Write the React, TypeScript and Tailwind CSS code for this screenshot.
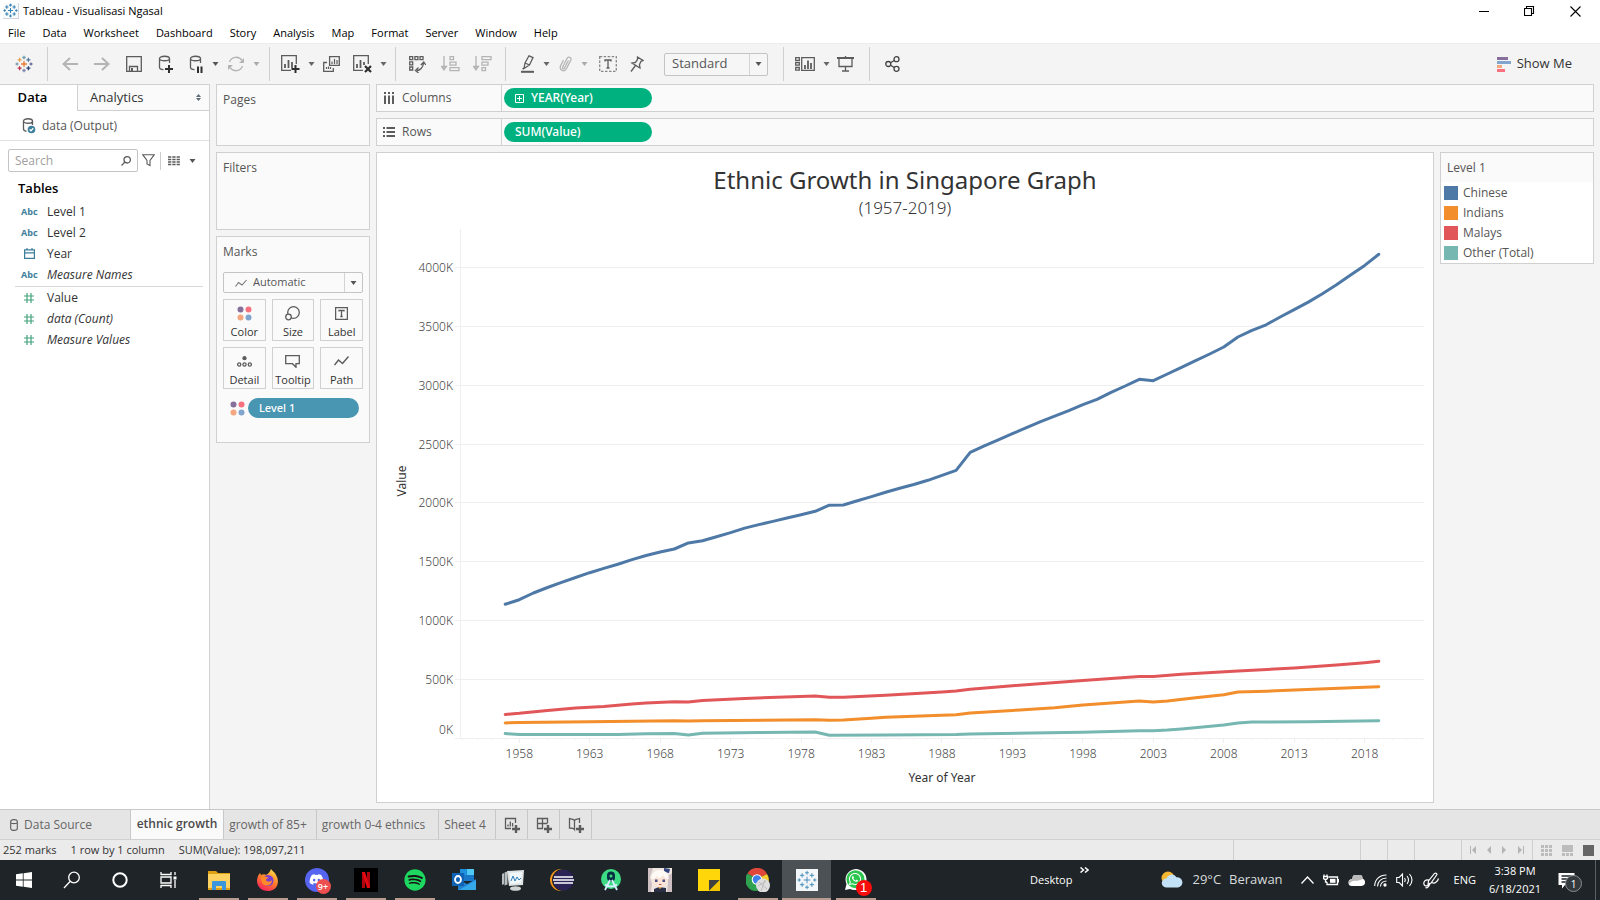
import type { ReactNode } from 'react';
import { FaDiscord, FaSpotify, FaWhatsapp } from 'react-icons/fa';

const UI = "font-['Open_Sans','Noto_Sans',sans-serif]";

/* ---------- small icons ---------- */

function Icon({ w = 18, h = 18, color = '#5c5c5c', children }: { w?: number; h?: number; color?: string; children: ReactNode }) {
  return (
    <svg width={w} height={h} viewBox={`0 0 ${w} ${h}`} fill="none" stroke={color} strokeWidth="1.3" aria-hidden="true" className="shrink-0">
      {children}
    </svg>
  );
}

function Caret({ color = '#555' }: { color?: string }) {
  return (
    <svg width="7" height="4" viewBox="0 0 7 4" aria-hidden="true" className="shrink-0">
      <path d="M.5 0h6L3.5 4z" fill={color} />
    </svg>
  );
}

const CLUSTER: [number, number, number][] = [
  [9, 9, 3],
  [9, 2.5, 1.7],
  [9, 15.5, 1.7],
  [2, 9, 1.5],
  [16, 9, 1.5],
  [4.6, 4.8, 2],
  [13.4, 4.8, 2],
  [4.6, 13.2, 2],
  [13.4, 13.2, 2],
];
const BRAND = ['#eb7b34', '#6fa0ab', '#7e86ad', '#7e9fae', '#6b6f9b', '#e8a04a', '#54789c', '#c0344a', '#283f70'];

function TableauMark({ size, colors, stroke = 1.3 }: { size: number; colors?: string[]; stroke?: number }) {
  return (
    <svg width={size} height={size} viewBox="0 0 18 18" fill="none" aria-hidden="true" className="shrink-0">
      {CLUSTER.map(([x, y, r], i) => (
        <path key={i} d={`M${x - r} ${y}h${2 * r}M${x} ${y - r}v${2 * r}`} stroke={colors ? colors[i] : '#3684b5'} strokeWidth={stroke} />
      ))}
    </svg>
  );
}

function FourDots() {
  return (
    <svg width="15" height="15" viewBox="0 0 15 15" aria-hidden="true" className="shrink-0">
      <circle cx="3.5" cy="3.5" r="3" fill="#86709b" />
      <circle cx="11.5" cy="3.5" r="3" fill="#f9707f" />
      <circle cx="3.5" cy="11.5" r="3" fill="#f4a77f" />
      <circle cx="11.5" cy="11.5" r="3" fill="#82a5cf" />
    </svg>
  );
}

const cylinder = 'M1.5 3.5c0-3 10-3 10 0s-10 3-10 0v9c0 1.2 2 2 4 2.2M11.5 3.5V8';

/* ---------- window chrome ---------- */

function TitleBar() {
  return (
    <header className="flex h-[22px] items-center justify-between bg-white pl-[3px] text-[11px] text-black">
      <div className="flex items-center gap-1">
        <span className="flex border-r border-b border-gray-300 bg-gray-50">
          <TableauMark size={15} />
        </span>
        <h1>Tableau - Visualisasi Ngasal</h1>
      </div>
      <div className="flex pr-px">
        <button aria-label="Minimize" className="grid h-5 w-[45px] place-items-center">
          <Icon w={11} h={11} color="#000"><path d="M0 5.5h10" strokeWidth="1" /></Icon>
        </button>
        <button aria-label="Restore" className="grid h-5 w-[45px] place-items-center">
          <Icon w={11} h={11} color="#000"><path d="M.5 2.5h7v7h-7zM2.5 2.5v-2h7v7h-2" strokeWidth="1.1" /></Icon>
        </button>
        <button aria-label="Close" className="grid h-5 w-[47px] place-items-center">
          <Icon w={11} h={11} color="#000"><path d="M.5.5l10 10M10.5.5l-10 10" strokeWidth="1.1" /></Icon>
        </button>
      </div>
    </header>
  );
}

const MENU = ['File', 'Data', 'Worksheet', 'Dashboard', 'Story', 'Analysis', 'Map', 'Format', 'Server', 'Window', 'Help'];

function MenuBar() {
  return (
    <nav className="flex h-[21px] items-center gap-[17px] bg-white px-2 pt-[2px] text-[11px] text-black">
      {MENU.map((m) => (
        <button key={m}>{m}</button>
      ))}
    </nav>
  );
}

function Divider() {
  return <span className="h-[34px] w-px shrink-0 bg-[#d0d0d0]" />;
}

function Tool({ label, width, caret, children }: { label: string; width: string; caret?: string; children: ReactNode }) {
  return (
    <>
      <button aria-label={label} className={`flex h-8 shrink-0 items-center ${caret ? 'justify-end pr-2' : 'justify-center'} ${width}`}>
        {children}
      </button>
      {caret && <Caret color={caret} />}
    </>
  );
}

function Toolbar() {
  return (
    <div className="flex h-[41px] items-center border-t border-[#ececec] bg-[#f4f4f4]">
      <Tool label="Start page" width="w-[47px]"><TableauMark size={18} colors={BRAND} /></Tool>
      <Divider />
      <Tool label="Undo" width="w-[44px]">
        <Icon w={16} h={14} color="#b4b4b4"><path d="M16 7H1.5M8 1L1.5 7 8 13" strokeWidth="2" /></Icon>
      </Tool>
      <Tool label="Redo" width="w-5">
        <Icon w={16} h={14} color="#b4b4b4"><path d="M0 7h14.5M8 1l6.5 6L8 13" strokeWidth="2" /></Icon>
      </Tool>
      <Tool label="Save" width="w-[44px]">
        <Icon w={16} h={16}><path d="M.7.7h14.6v14.6H.7zM3.5 15v-4.500h8V15" /><path d="M5 12h2v3H5z" fill="#5c5c5c" stroke="none" /></Icon>
      </Tool>
      <Tool label="New data source" width="w-5">
        <Icon w={16} h={18}><path d={cylinder} /><path d="M11 10v8M7 14h8" stroke="#2f2f2f" strokeWidth="2" /></Icon>
      </Tool>
      <Tool label="Pause auto updates" width="w-9" caret="#555">
        <Icon w={15} h={18}><path d={cylinder} /><path d="M9 11.500v6.500M12.500 11.500v6.500" stroke="#2f2f2f" strokeWidth="2" /></Icon>
      </Tool>
      <Tool label="Refresh data" width="w-[34px]" caret="#aaa">
        <Icon w={18} h={16} color="#b4b4b4"><path d="M2.500 6A7 7 0 0115 4.500M15.500 10A7 7 0 013 11.500" /><path d="M17 2v5h-5zM1 14V9h5z" fill="#b4b4b4" stroke="none" /></Icon>
      </Tool>
      <span className="w-[9px]" />
      <Divider />
      <Tool label="New worksheet" width="w-[38px]" caret="#666">
        <Icon w={19} h={18}><path d="M10 15.300H.7V.7h14.600V9" /><path d="M4 13V9M7.500 13V5M11 13V7" strokeWidth="1.800" /><path d="M14.500 10v8M10.500 14h8" stroke="#2f2f2f" strokeWidth="2" /></Icon>
      </Tool>
      <Tool label="Duplicate sheet" width="w-[33px]">
        <Icon w={17} h={16}><path d="M6.600.7h9.700v8.600H6.600zM4 6.500H.7v8.800h9.600V12" /><path d="M9 8V5.500M11.500 8V3M14 8V4M3.500 13v-2M5.500 13v-2.500M7.500 13v-2" strokeWidth="1.200" /></Icon>
      </Tool>
      <Tool label="Clear sheet" width="w-8" caret="#666">
        <Icon w={19} h={18}><path d="M10 15.300H.7V.7h14.600V9" /><path d="M4 13V9M7.500 13V5M11 10V7" strokeWidth="1.800" /><path d="M12 11l6 6M18 11l-6 6" stroke="#2f2f2f" strokeWidth="2.200" /></Icon>
      </Tool>
      <span className="w-2" />
      <Divider />
      <Tool label="Swap rows and columns" width="w-[42px]">
        <Icon w={17} h={17}><path d="M.7.7h3v3h-3zM5.900.7h3v3h-3zM11 .7h3v3h-3zM.7 5.900h3v3h-3zM.7 11h3v3h-3z" /><path d="M8 14.500c3 0 6-3 6.500-7M11.800 9l3-3 2 3M9.500 11.500l-3 3 3 2.500" /></Icon>
      </Tool>
      <Tool label="Sort ascending" width="w-[24px]">
        <Icon w={19} h={16} color="#b4b4b4"><path d="M3 0v13M.5 10.500L3 14l2.500-3.500zM9 .7h3.500v3H9zM9 6.200h6v3H9zM9 11.700h9v3H9z" /></Icon>
      </Tool>
      <Tool label="Sort descending" width="w-10">
        <Icon w={19} h={16} color="#b4b4b4"><path d="M3 0v13M.5 10.500L3 14l2.500-3.500zM9 .7h9v3H9zM9 6.200h6v3H9zM9 11.700h3.500v3H9z" /></Icon>
      </Tool>
      <span className="w-[3px]" />
      <Divider />
      <Tool label="Highlight" width="w-[37px]" caret="#666">
        <Icon w={14} h={18}><path d="M4 8L8 .8l4 1.800L8.500 10zM4 8l-1 5.500 5.500-3.500M4 8l4.500 2M3 13l-1.500 1" /><path d="M0 16.800h13" strokeWidth="2" /></Icon>
      </Tool>
      <Tool label="Group members" width="w-[31px]" caret="#aaa">
        <Icon w={14} h={16} color="#b4b4b4"><path d="M9.500 4.500l-4 7.500c-.8 1.500-2.500.5-1.800-1L8 2.500c1.200-2.500 5-1 3.800 1.800L7.500 12.500c-2 4-7.500 2-6-2.500L4.500 4" /></Icon>
      </Tool>
      <Tool label="Show mark labels" width="w-[39px]">
        <Icon w={18} h={16}><path d="M.7.7h16.600v14.600H.7z" strokeDasharray="2.500 1.500" stroke="#888" /><path d="M6 5.500V4h6v1.500M9 4v8M7.500 12h3" /></Icon>
      </Tool>
      <Tool label="Fix axes" width="w-5">
        <Icon w={14} h={16}><path d="M7.500 1l5.500 3.500-2 .8-1.500 3.200.5 3.500-8-5 3.500-.7L7.500 3.500zM5.500 9.500L1 15.500" /></Icon>
      </Tool>
      <div className="relative mr-[15px] ml-[17px] flex shrink-0">
        <select aria-label="Fit" className="h-[23px] w-[104px] appearance-none rounded-xs border border-[#c4c4c4] bg-[#f6f6f6] pl-[7px] text-[13px] text-[#555]">
          <option>Standard</option>
        </select>
        <span className="pointer-events-none absolute inset-y-px right-px grid w-[18px] place-items-center border-l border-[#d4d4d4]">
          <Caret />
        </span>
      </div>
      <Divider />
      <Tool label="Show cards" width="w-[39px]" caret="#666">
        <Icon w={20} h={14}><path d="M.7.700h3.600v2.600H.7zM.7 5.500h3.600v2.600H.7zM.7 10.500h3.600v2.600H.7zM6.700.7h12.600v12.600H6.700z" /><path d="M10 12V8M13 12V3.500M16 12V6" strokeWidth="1.800" /></Icon>
      </Tool>
      <Tool label="Presentation mode" width="w-[31px]">
        <Icon w={17} h={16}><path d="M0 2h17" strokeWidth="2" /><path d="M2 2v8.500h13V2M8.500 0v2M8.500 10.500v4M5 15h7" /></Icon>
      </Tool>
      <span className="w-2" />
      <Divider />
      <Tool label="Share" width="w-[45px]">
        <Icon w={15} h={16} color="#444"><circle cx="3.300" cy="8" r="2.500" /><circle cx="11.500" cy="3.200" r="2.500" /><circle cx="11.500" cy="12.800" r="2.500" /><path d="M5.500 6.700l3.800-2.200M5.500 9.300l3.800 2.200" /></Icon>
      </Tool>
      <button className="ml-auto flex items-center gap-[6px] pr-7 text-[13px] text-[#333]">
        <svg width="14" height="15" viewBox="0 0 14 15" aria-hidden="true">
          <path d="M0 0h11v3H0z" fill="#86709b" />
          <path d="M0 4h14v3H0z" fill="#82a5cf" />
          <path d="M0 8h5v3H0z" fill="#f4a77f" />
          <path d="M0 12h8v3H0z" fill="#f9707f" />
        </svg>
        Show Me
      </button>
    </div>
  );
}

/* ---------- data pane ---------- */

type FieldKind = 'abc' | 'date' | 'num';

function FieldIcon({ kind }: { kind: FieldKind }) {
  if (kind === 'abc') return <span className="w-4 text-[9px] font-bold text-[#3d7e9b]">Abc</span>;
  if (kind === 'date')
    return (
      <span className="flex w-4 justify-center">
        <Icon w={11} h={11} color="#3d7e9b"><path d="M.6 1.900h9.800v8.500H.6zM.6 4.800h9.800M3 0v2M8 0v2" strokeWidth="1.200" /></Icon>
      </span>
    );
  return (
    <span className="flex w-4 justify-center">
      <Icon w={10} h={10} color="#44a27c"><path d="M3 0v10M7 0v10M0 3h10M0 7h10" strokeWidth="1.200" /></Icon>
    </span>
  );
}

function Field({ kind, name, italic }: { kind: FieldKind; name: string; italic?: boolean }) {
  return (
    <li className="flex h-[21px] items-center gap-[10px] pl-[6px]">
      <FieldIcon kind={kind} />
      <span className={italic ? 'italic' : ''}>{name}</span>
    </li>
  );
}

function DataPane() {
  return (
    <aside className="w-[210px] shrink-0 border-r border-[#d0d0d0] bg-white">
      <div className="flex h-[27px] border-t border-[#d0d0d0] text-[13px]">
        <button className="w-[77px] pr-3 font-semibold text-black">Data</button>
        <button className="flex flex-1 items-center justify-between border-b border-l border-[#d0d0d0] bg-[#fafafa] pr-2 pl-3 text-[#333]">
          Analytics
          <svg width="5" height="7" viewBox="0 0 5 7" aria-hidden="true"><path d="M0 3l2.500-3L5 3zM0 4h5L2.500 7z" fill="#5d6b75" /></svg>
        </button>
      </div>
      <div className="flex h-[30px] items-center gap-[6px] border-b border-[#e2e2e2] pl-[22px] text-xs text-[#555]">
        <Icon w={14} h={16}><path d="M1.500 3c0-3 9-3 9 0s-9 3-9 0v8c0 1 1 2 3 2.300M10.500 3v4" /><circle cx="9.500" cy="11.500" r="3.800" fill="#3d7e9b" stroke="none" /><path d="M7.700 11.500l1.300 1.300 2.300-2.500" stroke="#fff" /></Icon>
        data (Output)
      </div>
      <div className="mt-2 flex h-[23px] items-center pl-2">
        <label className="flex h-[23px] w-[130px] items-center rounded-xs border border-[#c4c4c4] px-[6px]">
          <input type="search" aria-label="Search fields" placeholder="Search" className="w-full min-w-0 bg-transparent text-xs outline-none placeholder:text-[#a0a0a0]" />
          <Icon w={10} h={10}><circle cx="6.200" cy="3.800" r="3.200" /><path d="M4 6L.5 9.500" /></Icon>
        </label>
        <button aria-label="Filter fields" className="grid w-[21px] place-items-center">
          <Icon w={13} h={13}><path d="M.7.700h11.600L8 6.500v5L5 10V6.500z" strokeWidth="1.100" /></Icon>
        </button>
        <span className="ml-px h-[18px] w-px bg-[#ccc]" />
        <button aria-label="View options" className="ml-[7px] flex items-center gap-[9px]">
          <Icon w={12} h={10}><path d="M0 1h12M0 3.500h12M0 6h12M0 8.500h12" strokeDasharray="3.300 1" /></Icon>
          <Caret />
        </button>
      </div>
      <h2 className="mt-[6px] pl-[18px] text-[13px] leading-5 font-semibold text-black">Tables</h2>
      <ul className="mx-[15px] mt-[3px] mr-[6px] border-b border-[#d8d8d8] pb-px text-xs text-[#333]">
        <Field kind="abc" name="Level 1" />
        <Field kind="abc" name="Level 2" />
        <Field kind="date" name="Year" />
        <Field kind="abc" name="Measure Names" italic />
      </ul>
      <ul className="mx-[15px] text-xs text-[#333]">
        <Field kind="num" name="Value" />
        <Field kind="num" name="data (Count)" italic />
        <Field kind="num" name="Measure Values" italic />
      </ul>
    </aside>
  );
}

/* ---------- cards ---------- */

function Card({ title, className, children }: { title: string; className: string; children?: ReactNode }) {
  return (
    <section className={`border border-[#d0d0d0] bg-[#fafafa] px-[6px] pt-[6px] ${className}`}>
      <h2 className="text-xs leading-[18px] text-[#555]">{title}</h2>
      {children}
    </section>
  );
}

const MARKS: { name: string; icon: ReactNode }[] = [
  { name: 'Color', icon: <FourDots /> },
  { name: 'Size', icon: <Icon w={15} h={15}><circle cx="8.500" cy="6.500" r="5.800" /><circle cx="3.500" cy="11" r="2.800" fill="#fafafa" /></Icon> },
  { name: 'Label', icon: <Icon w={13} h={13}><path d="M.6.600h11.800v11.800H.6z" /><path d="M4 4.500V3.500h5v1M6.500 3.500v6M5.300 9.500h2.400" /></Icon> },
  { name: 'Detail', icon: <Icon w={15} h={11}><circle cx="7.500" cy="2.200" r="2.100" fill="#5c5c5c" stroke="none" /><circle cx="2.200" cy="8.500" r="1.600" /><circle cx="7.500" cy="8.500" r="1.600" /><circle cx="12.800" cy="8.500" r="1.600" /></Icon> },
  { name: 'Tooltip', icon: <Icon w={15} h={13}><path d="M.7.700h13.600v8H11v3.600L7.500 8.700H.7z" /></Icon> },
  { name: 'Path', icon: <Icon w={15} h={10}><path d="M.5 9l4-5 4 3.500 6-7" strokeWidth="1.500" /></Icon> },
];

function Cards() {
  return (
    <div className="flex w-[154px] shrink-0 flex-col gap-[6px]">
      <Card title="Pages" className="h-[62px]" />
      <Card title="Filters" className="h-[78px]" />
      <Card title="Marks" className="h-[207px]">
        <div className="relative mt-[11px] flex">
          <select aria-label="Mark type" className="h-[21px] w-full appearance-none rounded-xs border border-[#c4c4c4] bg-[#fafafa] pl-[29px] text-[11px] text-[#555]">
            <option>Automatic</option>
          </select>
          <span className="pointer-events-none absolute inset-y-0 left-3 flex items-center">
            <Icon w={12} h={8} color="#777"><path d="M.5 7.500l3-4 3.500 2.500 4.500-5" strokeWidth="1.100" /></Icon>
          </span>
          <span className="pointer-events-none absolute inset-y-px right-px grid w-[18px] place-items-center border-l border-[#d4d4d4]">
            <Caret />
          </span>
        </div>
        <div className="mt-[6px] grid grid-cols-3 gap-[6px]">
          {MARKS.map((m) => (
            <button key={m.name} className="flex h-[42px] flex-col items-center justify-between border border-[#d0d0d0] pt-[3px] pb-px text-[11px] leading-[15px] text-[#333]">
              <span className="grid h-5 place-items-center">{m.icon}</span>
              {m.name}
            </button>
          ))}
        </div>
        <div className="mt-[9px] flex items-center gap-[3px] pr-1 pl-[7px]">
          <FourDots />
          <button className="h-5 flex-1 rounded-full bg-[#4996b2] pl-[11px] text-left font-['Noto_Sans',sans-serif] text-[11px] font-medium text-white">Level 1</button>
        </div>
      </Card>
    </div>
  );
}

/* ---------- shelves ---------- */

function Shelf({ label, icon, pill, expandable }: { label: string; icon: ReactNode; pill: string; expandable?: boolean }) {
  return (
    <div className="flex h-7 items-center border border-[#d0d0d0] bg-[#fafafa]">
      <div className="flex h-full w-[125px] items-center gap-[7px] border-r border-[#d0d0d0] pl-[6px] text-xs text-[#555]">
        {icon}
        {label}
      </div>
      <button className="ml-[2px] flex h-5 w-[148px] items-center gap-[7px] rounded-full bg-[#00b180] pl-[11px] font-['Noto_Sans',sans-serif] text-xs font-medium text-white">
        {expandable && <Icon w={9} h={9} color="#fff"><path d="M.5.500h8v8h-8zM4.500 2v5M2 4.500h5" strokeWidth="1" /></Icon>}
        {pill}
      </button>
    </div>
  );
}

/* ---------- chart ---------- */

type Point = [year: number, thousands: number];
const SERIES: { name: string; color: string; swatch: string; points: Point[] }[] = [
  {
    name: 'Chinese',
    color: '#4e79a7',
    swatch: 'bg-[#4e79a7]',
    points: [
      1137, 1176, 1233, 1280, 1324, 1365, 1406, 1442, 1478, 1517, 1552, 1582, 1607, 1659, 1677, 1712, 1747, 1785, 1815, 1842, 1871, 1898, 1928, 1980, 1981, 2017, 2053, 2089, 2123, 2156, 2191, 2234,
      2276, 2429, 2484, 2536, 2588, 2639, 2690, 2736, 2783, 2834, 2880, 2940, 2993, 3050, 3038, 3095, 3152, 3208, 3265, 3325, 3410, 3467, 3514, 3580, 3642, 3707, 3778, 3854, 3937, 4019, 4113,
    ].map((v, i): Point => [1957 + i, v]),
  },
  {
    name: 'Indians',
    color: '#f28e2b',
    swatch: 'bg-[#f28e2b]',
    points: [[1957, 128], [1958, 131], [1963, 138], [1969, 147], [1970, 144], [1971, 147], [1979, 156], [1980, 151], [1981, 154], [1983, 168], [1984, 176], [1988, 193], [1989, 198], [1990, 213], [1993, 235], [1996, 258], [1998, 281], [2000, 298], [2002, 315], [2003, 306], [2004, 315], [2006, 343], [2008, 368], [2009, 390], [2011, 397], [2013, 408], [2018, 431], [2019, 436]],
  },
  {
    name: 'Malays',
    color: '#e15759',
    swatch: 'bg-[#e15759]',
    points: [[1957, 201], [1958, 210], [1960, 235], [1962, 254], [1964, 269], [1966, 290], [1967, 298], [1969, 309], [1970, 306], [1971, 320], [1974, 337], [1979, 357], [1980, 346], [1981, 347], [1984, 363], [1988, 391], [1989, 400], [1990, 414], [1993, 445], [1998, 490], [2002, 524], [2003, 524], [2005, 542], [2009, 570], [2013, 595], [2016, 620], [2018, 640], [2019, 652]],
  },
  {
    name: 'Other (Total)',
    color: '#76b7b2',
    swatch: 'bg-[#76b7b2]',
    points: [[1957, 37], [1958, 30], [1965, 31], [1967, 36], [1969, 37], [1970, 25], [1971, 40], [1975, 46], [1979, 51], [1980, 24], [1984, 26], [1989, 29], [1990, 33], [1998, 49], [2002, 62], [2003, 62], [2004, 68], [2005, 77], [2008, 111], [2009, 128], [2010, 136], [2014, 139], [2019, 147]],
  },
];

const W = 1056;
const H = 583;
const LEFT = 83.5;
const RIGHT = 1047;
const ZERO = 519;
const px = (year: number) => 128.2 + (year - 1957) * 14.09;
const py = (k: number) => ZERO - k * 0.1176;
const gridY = (k: number) => Math.floor(py(k)) + 0.5;
const Y_TICKS = [0, 500, 1000, 1500, 2000, 2500, 3000, 3500, 4000];
const YEARS = Array.from({ length: 69 }, (_, i) => 1954 + i);

function Chart() {
  return (
    <svg viewBox={`0 0 ${W} ${H}`} className="block w-full font-['Noto_Sans',sans-serif] text-xs" role="img" aria-label="Value by year for each ethnic group">
      <g stroke="#efefef">
        {Y_TICKS.map((t) => (
          <path key={t} d={`M78 ${gridY(t)}H${RIGHT}`} />
        ))}
        <path d={`M${LEFT} 10V${ZERO}`} />
        {YEARS.map((y) => (
          <path key={y} d={`M${Math.floor(px(y)) + 0.5} ${ZERO}v${y % 5 === 3 ? 5 : 2}`} />
        ))}
      </g>
      <g fill="#444" className="font-light">
        {Y_TICKS.map((t) => (
          <text key={t} x="76" y={t === 0 ? 515 : gridY(t) + 4.5} textAnchor="end">{t}K</text>
        ))}
        {YEARS.filter((y) => y % 5 === 3).map((y) => (
          <text key={y} x={px(y)} y="539" textAnchor="middle">{y}</text>
        ))}
      </g>
      <g fill="#333" textAnchor="middle">
        <text x="565" y="563">Year of Year</text>
        <text transform="translate(29 262) rotate(-90)">Value</text>
      </g>
      <g fill="none" strokeWidth="3" strokeLinejoin="round" strokeLinecap="round">
        {SERIES.map((s) => (
          <polyline key={s.name} stroke={s.color} points={s.points.map(([y, k]) => `${px(y).toFixed(1)},${py(k).toFixed(1)}`).join(' ')} />
        ))}
      </g>
    </svg>
  );
}

function Workspace() {
  return (
    <main className="flex min-w-0 flex-1 flex-col gap-[6px]">
      <Shelf
        label="Columns"
        pill="YEAR(Year)"
        expandable
        icon={<Icon w={12} h={12}><path d="M2 0v2M6 0v2M10 0v2M2 3.500V12M6 3.500V12M10 3.500V12" strokeWidth="2" /></Icon>}
      />
      <Shelf
        label="Rows"
        pill="SUM(Value)"
        icon={<Icon w={12} h={12}><path d="M0 2h2M0 6h2M0 10h2M3.500 2H12M3.500 6H12M3.500 10H12" strokeWidth="2" /></Icon>}
      />
      <div className="flex flex-1 items-start gap-[6px]">
        <section className="min-w-0 flex-1 self-stretch border border-[#d0d0d0] bg-white pt-[9px] text-center font-['Noto_Sans',sans-serif] text-[#333]">
          <h2 className="text-2xl leading-9">Ethnic Growth in Singapore Graph</h2>
          <p className="pb-px text-[17px] leading-5 font-light">(1957-2019)</p>
          <Chart />
        </section>
        <section className="w-[154px] shrink-0 border border-[#d0d0d0] bg-white text-xs text-[#555]">
          <h2 className="h-[29px] bg-[#fafafa] pt-[6px] pl-[6px] leading-[18px]">Level 1</h2>
          <ul className="pt-px">
            {SERIES.map((s) => (
              <li key={s.name} className="flex h-5 items-center gap-[5px] pl-[3px]">
                <span className={`size-[14px] ${s.swatch}`} />
                {s.name}
              </li>
            ))}
          </ul>
        </section>
      </div>
    </main>
  );
}

/* ---------- sheet tabs and status ---------- */

const plusBadge = <path d="M12 8v8M8 12h8" stroke="#5c5c5c" strokeWidth="2.400" />;

function SheetTabs() {
  return (
    <nav className="flex h-[30px] border-t border-[#c8c8c8] bg-[#e5e5e5] text-xs text-[#666]">
      <button className="flex w-[131px] items-center gap-[6px] border-r border-[#c8c8c8] pl-[10px]">
        <Icon w={8} h={12}><path d="M.7 2.500c0-2.500 6.600-2.500 6.600 0v7c0 2.500-6.600 2.500-6.600 0zM.7 3.500c1 1.500 5.600 1.500 6.600 0" strokeWidth="1.100" /></Icon>
        Data Source
      </button>
      <button className="w-[93px] border-r border-[#c8c8c8] bg-[#fafafa] pb-[2px] font-semibold whitespace-nowrap text-[#4a4a4a]">ethnic growth</button>
      <button className="w-[93px] border-r border-[#c8c8c8] pr-1 whitespace-nowrap">growth of 85+</button>
      <button className="w-[122px] border-r border-[#c8c8c8] pr-2 whitespace-nowrap">growth 0-4 ethnics</button>
      <button className="w-[57px] border-r border-[#c8c8c8] pr-1 whitespace-nowrap">Sheet 4</button>
      <button aria-label="New worksheet" className="grid w-8 place-items-center border-r border-[#c8c8c8]">
        <Icon w={16} h={16}><path d="M7 11.500H1.500V1.500h10V6" /><path d="M4 9.500V7.500M6.300 9.500v-5M8.600 9.500V6" />{plusBadge}</Icon>
      </button>
      <button aria-label="New dashboard" className="grid w-8 place-items-center border-r border-[#c8c8c8]">
        <Icon w={16} h={16}><path d="M7 11.500H1.500V1.500h10V6M6.500 1.500v10M1.500 6.500h10" />{plusBadge}</Icon>
      </button>
      <button aria-label="New story" className="grid w-8 place-items-center border-r border-[#c8c8c8]">
        <Icon w={16} h={16}><path d="M6.500 3.500C5.500 2 3.500 2.500 1.500 1.500v9.500c2 0 4 0 5 1.500zM6.500 3.500c1-1.500 3-1 5-2V6" />{plusBadge}</Icon>
      </button>
    </nav>
  );
}

function StatusBar() {
  return (
    <div className="flex h-[21px] items-stretch border-t border-[#d0d0d0] bg-[#ebebeb] text-[11px] text-[#333]">
      <div className="flex items-center gap-[14px] pl-[3px]">
        <span>252 marks</span>
        <span>1 row by 1 column</span>
        <span>SUM(Value): 198,097,211</span>
      </div>
      <div className="ml-auto flex *:border-l *:border-[#cfcfcf]">
        <span className="w-[127px]" />
        <span className="w-[27px]" />
        <span className="w-[27px]" />
        <span className="w-[47px]" />
        <div className="flex w-[71px] items-center justify-between px-2 *:flex *:h-4 *:items-center">
          <button aria-label="First sheet"><Icon w={7} h={8}><path d="M0 0h1v8H0zM6 0v8L2 4z" fill="#b4b4b4" stroke="none" /></Icon></button>
          <button aria-label="Previous sheet"><Icon w={5} h={8}><path d="M4 0v8L0 4z" fill="#b4b4b4" stroke="none" /></Icon></button>
          <button aria-label="Next sheet"><Icon w={5} h={8}><path d="M0 0v8l4-4z" fill="#b4b4b4" stroke="none" /></Icon></button>
          <button aria-label="Last sheet"><Icon w={7} h={8}><path d="M6 0h1v8H6zM1 0v8l4-4z" fill="#b4b4b4" stroke="none" /></Icon></button>
        </div>
        <div className="flex w-[68px] items-center gap-[10px] pl-2 *:flex *:h-4 *:items-center">
          <button aria-label="Sheet sorter"><Icon w={11} h={11}><path d="M0 0h3v3H0zM4 0h3v3H4zM8 0h3v3H8zM0 4h3v3H0zM4 4h3v3H4zM8 4h3v3H8zM0 8h3v3H0zM4 8h3v3H4zM8 8h3v3H8z" fill="#bcbcbc" stroke="none" /></Icon></button>
          <button aria-label="Filmstrip"><Icon w={11} h={11}><path d="M0 0h11v7H0zM0 8h3v3H0zM4 8h3v3H4zM8 8h3v3H8z" fill="#bcbcbc" stroke="none" /></Icon></button>
          <button aria-label="Tabs view"><Icon w={11} h={11}><path d="M0 0h11v11H0z" fill="#666" stroke="none" /></Icon></button>
        </div>
      </div>
    </div>
  );
}

/* ---------- taskbar ---------- */

function App24({ children }: { children: ReactNode }) {
  return <svg width="24" height="24" viewBox="0 0 24 24" aria-hidden="true">{children}</svg>;
}

const APPS: { name: string; open?: boolean; active?: boolean; icon: ReactNode }[] = [
  {
    name: 'File Explorer',
    open: true,
    icon: (
      <App24>
        <path d="M1 3h8l2 2h12v17H1z" fill="#dfa112" />
        <path d="M1 6h22v14H1z" fill="#fdd261" />
        <path d="M5 22v-8q0-1 1-1h12q1 0 1 1v8h-4v-4H9v4z" fill="#3b96dc" />
      </App24>
    ),
  },
  {
    name: 'Firefox',
    open: true,
    icon: (
      <App24>
        <defs>
          <linearGradient id="fx" x1="0.8" y1="0" x2="0.3" y2="1">
            <stop offset="0" stopColor="#ffe14a" />
            <stop offset="0.5" stopColor="#ff7d29" />
            <stop offset="1" stopColor="#f6215f" />
          </linearGradient>
        </defs>
        <path d="M15 1c1 2 4 3 5 6 4 6 2 16-8 16C5 23 1 18 1 13c0-3 1-6 3-8l1 2c2-1 4-1 5 0 2-1 4-3 5-6z" fill="url(#fx)" />
        <circle cx="12" cy="12.500" r="5.500" fill="#7a3fd0" />
        <path d="M5 9c3-2 6 0 8 1-2 0-3 1-3 2 1 2 4 2 6 0 0 4-3 6-6 5.500S5 14 5 9z" fill="#ff8a2a" />
      </App24>
    ),
  },
  {
    name: 'Discord',
    open: true,
    icon: (
      <span className="relative grid size-6 place-items-center rounded-full bg-[#5664ef] text-white">
        <FaDiscord size={15} />
        <span className="absolute -right-[2px] -bottom-[2px] grid size-[15px] place-items-center rounded-full bg-[#ed4f50] text-[9px] leading-none font-semibold">9+</span>
      </span>
    ),
  },
  {
    name: 'Netflix',
    open: true,
    icon: (
      <App24>
        <path d="M0 0h24v24H0z" fill="#000" />
        <path d="M8 4h3v16H8zM13 4h3v16h-3z" fill="#b1060f" />
        <path d="M8 4h3l5 16h-3z" fill="#e50914" />
      </App24>
    ),
  },
  {
    name: 'Spotify',
    open: true,
    icon: (
      <span className="grid size-[22px] place-items-center rounded-full bg-[#191414] text-[#1ed760]"><FaSpotify size={22} /></span>
    ),
  },
  {
    name: 'Outlook',
    icon: (
      <App24>
        <path d="M8 1h14v12H8z" fill="#1a78c8" />
        <path d="M15 1h7v6h-7z" fill="#50c8f4" />
        <path d="M8 1h7v6H8z" fill="#1e90dc" />
        <path d="M6 11l9 5 9-5v11H6z" fill="#1f7fd0" />
        <path d="M24 12v10H7z" fill="#35a8ea" />
        <path d="M0 5h12v13H0z" fill="#0f62b4" />
        <ellipse cx="6" cy="11.500" rx="3" ry="3.500" fill="none" stroke="#fff" strokeWidth="1.800" />
      </App24>
    ),
  },
  {
    name: 'System monitor',
    icon: (
      <App24>
        <path d="M1 6l2-1v11l-2 1zM3.500 4.500l3-1v13l-3 1z" fill="#b9c0c2" />
        <path d="M6 3l17-1-1 15-14 1z" fill="#dfe3e4" />
        <path d="M8.500 5l12.500-1-1 11-10.500 1z" fill="#f0f8fc" />
        <path d="M10 13l2-5 2 5 2-4 2 3 2-2" fill="none" stroke="#2e7cb8" />
        <ellipse cx="14.500" cy="20.500" rx="5.500" ry="2.300" fill="#cfd3d4" />
      </App24>
    ),
  },
  {
    name: 'Eclipse',
    icon: (
      <App24>
        <circle cx="11" cy="12" r="11" fill="#f7941e" />
        <circle cx="13" cy="12" r="11" fill="#1e2427" />
        <circle cx="13.500" cy="12" r="10.500" fill="#2c2255" />
        <path d="M4 9h19M3 12h21M4 15h19" stroke="#fff" strokeWidth="1.400" />
      </App24>
    ),
  },
  {
    name: 'Android Studio',
    icon: (
      <App24>
        <circle cx="12" cy="11" r="10" fill="#3ddc84" />
        <path d="M12 3.500a4 4 0 014 4v2a4 4 0 01-8 0v-2a4 4 0 014-4z" fill="#073042" />
        <circle cx="12" cy="8" r="1.500" fill="#3ddc84" />
        <path d="M11 12L6 22M13 12l5 10M6 16.500q6 4 12 0" fill="none" stroke="#d7effe" strokeWidth="1.800" />
      </App24>
    ),
  },
  {
    name: 'Game launcher',
    icon: (
      <App24>
        <path d="M0 0h24v24H0z" fill="#efe6e2" />
        <path d="M0 0h5l-3 9 2 7-1 8H0zM20 8l4-3v19h-5l1-8z" fill="#cdbfc2" />
        <path d="M16 0l6 1-1 4-5-1z" fill="#34457e" />
        <path d="M5 9q7-4 14 0v5q-2 5-7 5t-7-5z" fill="#fbe3d6" />
        <path d="M3 11q1-9 9-9t9 9q-4 0-6-4-1 3-5 3-1-1-1-2-2 3-6 3z" fill="#fffaf6" />
        <path d="M7 11.500h2.500V14H7zM14.500 11.500H17V14h-2.500z" fill="#4a4f86" />
        <path d="M11 16.500h2.500" stroke="#b0605c" />
        <path d="M6 21l5-2 7 1v4H6z" fill="#2c2f48" />
        <path d="M10 19h4l-2 2z" fill="#e0b25c" />
      </App24>
    ),
  },
  {
    name: 'Sticky Notes',
    icon: (
      <App24>
        <path d="M1 1h22v22H1z" fill="#ffd60a" />
        <path d="M12 12h11L12 23z" fill="#40403e" />
        <path d="M23 12v11H12z" fill="#f2c500" />
      </App24>
    ),
  },
  {
    name: 'Chrome',
    open: true,
    icon: (
      <App24>
        <path d="M11 11L1.500 5.500A11 11 0 0121 6z" fill="#e0473a" />
        <path d="M11 11l10-5a11 11 0 01-9 17z" fill="#fbcd2f" />
        <path d="M11 11L1.500 5.500A11 11 0 0011.500 23z" fill="#2fa250" />
        <circle cx="11" cy="11.500" r="5.300" fill="#fff" />
        <circle cx="11" cy="11.500" r="4.200" fill="#3f80ea" />
        <circle cx="17" cy="17.500" r="7" fill="#dedede" />
        <path d="M13 14l8 7M12 18l8-5M15 23l4-11" stroke="#bcbcbc" />
      </App24>
    ),
  },
  {
    name: 'Tableau',
    open: true,
    active: true,
    icon: <span className="grid size-[22px] place-items-center bg-[#f4f7f9]"><TableauMark size={20} stroke={0.8} /></span>,
  },
  {
    name: 'WhatsApp',
    open: true,
    icon: (
      <span className="relative grid size-6 place-items-center text-white">
        <App24>
          <path d="M1 22l1.500-6A10.500 10.500 0 1111 22q-3 0-5-1z" fill="#fff" />
          <circle cx="11.500" cy="11.200" r="9" fill="#2cc64e" />
        </App24>
        <span className="absolute top-1 left-1"><FaWhatsapp size={14} /></span>
        <span className="absolute -right-1 -bottom-1 grid size-4 place-items-center rounded-full bg-[#f90c0c] font-['Liberation_Sans',sans-serif] text-[13px] leading-none">1</span>
      </span>
    ),
  },
];

function Taskbar() {
  return (
    <footer className="flex h-10 items-center bg-[#1e2427] text-white">
      <button aria-label="Start" className="grid h-10 w-12 place-items-center">
        <App24><path d="M4 6.300l6.800-1v6.300H4zM11.600 5.200L20 4v7.600h-8.400zM4 12.400h6.800v6.300L4 17.700zM11.600 12.400H20V20l-8.400-1.200z" fill="#fff" /></App24>
      </button>
      <button aria-label="Search" className="grid h-10 w-12 place-items-center">
        <Icon w={18} h={18} color="#fff"><circle cx="11" cy="6.500" r="5.300" /><path d="M7 10.500L1 17" /></Icon>
      </button>
      <button aria-label="Cortana" className="grid h-10 w-12 place-items-center">
        <Icon w={18} h={18} color="#fff"><circle cx="9" cy="9" r="6.700" strokeWidth="2" /></Icon>
      </button>
      <button aria-label="Task view" className="mr-[2px] grid h-10 w-12 place-items-center">
        <Icon w={17} h={16} color="#fff"><path d="M1 0v2.500h10V0M1 5h10v6H1zM1 16v-2.500h10V16M15 0v3M15 8v8" /><path d="M13.500 4.500h3v3h-3z" fill="#fff" stroke="none" /></Icon>
      </button>
      {APPS.map((a) => (
        <button key={a.name} aria-label={a.name} className={`flex h-10 w-[49px] flex-col items-center ${a.active ? 'bg-[#4b5154]' : ''}`}>
          <span className="grid h-[38px] place-items-center pt-px">{a.icon}</span>
          {a.open && <span className={`h-[2px] bg-[#b99c90] ${a.active ? 'w-full' : 'w-10'}`} />}
        </button>
      ))}

      <div className="ml-auto flex h-10 shrink-0 items-center text-[11px]">
        <span>Desktop</span>
        <button aria-label="Desktop toolbar" className="ml-2 self-start pt-[7px]">
          <Icon w={9} h={6} color="#fff"><path d="M.5.500L3.500 3l-3 2.500M5 .500L8 3 5 5.500" strokeWidth="1.500" /></Icon>
        </button>
        <button className="ml-[72px] flex items-center text-[13px] text-[#d8dadb]">
          <svg width="22" height="18" viewBox="0 0 22 18" aria-hidden="true">
            <circle cx="7" cy="7" r="6.500" fill="#f7b733" />
            <path d="M5 16.500a4.500 4.500 0 01.5-9 5.500 5.500 0 0110-1.200 5 5 0 011.500 10.200z" fill="#c3e2f7" />
          </svg>
          <span className="ml-[9px]">29°C</span>
          <span className="ml-2">Berawan</span>
        </button>
        <div className="ml-[18px] flex items-center gap-[9px]">
          <Icon w={13} h={8} color="#fff"><path d="M.5 7.500L6.500 1l6 6.500" /></Icon>
          <Icon w={16} h={12} color="#fff"><path d="M5.500 3h9v7.500H4V8M15.500 5v3.500M1 .5v2M4 .5v2M.5 2.500h4v2q-2 2-4 0zM2.500 5v3h1.500" /><path d="M7 4.800h5.500v4H7z" fill="#fff" stroke="none" /></Icon>
          <Icon w={17} h={11}><path d="M4 11a3.500 3.500 0 010-7 5 5 0 019-.500A3.700 3.700 0 0113.500 11z" fill="#fff" stroke="none" /><path d="M1 9c2-3 5-4 8-3l6-2A5 5 0 004 4 3.500 3.500 0 001 9z" fill="#bbb" stroke="none" /></Icon>
          <Icon w={13} h={13} color="#fff"><path d="M.7 12C.7 5.500 5.500 1 12.500 1M3.500 12.500c0-5 4-8.500 9-8.500M6.500 12.500c0-3.500 3-5.500 6-5.500" strokeWidth="1.100" /><circle cx="11" cy="11" r="1" fill="#fff" /></Icon>
          <Icon w={17} h={14} color="#fff"><path d="M.7 4.500h2.500L6.500 1v12L3.200 9.500H.7zM8.500 5q1.500 2 0 4M11 3q3 4 0 8M13.500 1q5 6 0 12" strokeWidth="1.100" /></Icon>
          <Icon w={18} h={17} color="#fff"><path d="M12.500 1.500q2-1 2.500 1L9 11l-3 1.500.5-3.500zM7 8C3.500 7 1 10 2 12.500s4 1.500 6-1.500M8 11.500c-1 3-3 5-4.500 4M10 10.500c3 2 6-2 6.500-4" strokeWidth="1.200" /></Icon>
        </div>
        <span className="ml-[14px]">ENG</span>
        <div className="ml-3 w-[54px] text-center leading-[18px] whitespace-nowrap">
          <div>3:38 PM</div>
          <div>6/18/2021</div>
        </div>
        <button aria-label="Notifications" className="relative ml-4 h-6 w-6">
          <Icon w={17} h={17}><path d="M.5 1h16v12H7l-3 3.500V13H.5z" fill="#fff" stroke="none" /><path d="M3.500 4h10M3.500 7h10M3.500 10h6" stroke="#1e2427" /></Icon>
          <span className="absolute right-0 bottom-0 grid size-[17px] place-items-center rounded-full border border-[#8a8f92] bg-[#33393c] text-[10px] leading-none">1</span>
        </button>
        <span className="ml-[13px] h-10 w-[5px] border-l border-[#5a6063]" />
      </div>
    </footer>
  );
}

export default function App() {
  return (
    <div className={`flex min-h-screen flex-col bg-[#f4f4f4] ${UI}`}>
      <TitleBar />
      <MenuBar />
      <Toolbar />
      <div className="flex flex-1 items-stretch">
        <DataPane />
        <div className="flex min-w-0 flex-1 gap-[6px] px-[6px] pb-[6px]">
          <Cards />
          <Workspace />
        </div>
      </div>
      <SheetTabs />
      <StatusBar />
      <Taskbar />
    </div>
  );
}
